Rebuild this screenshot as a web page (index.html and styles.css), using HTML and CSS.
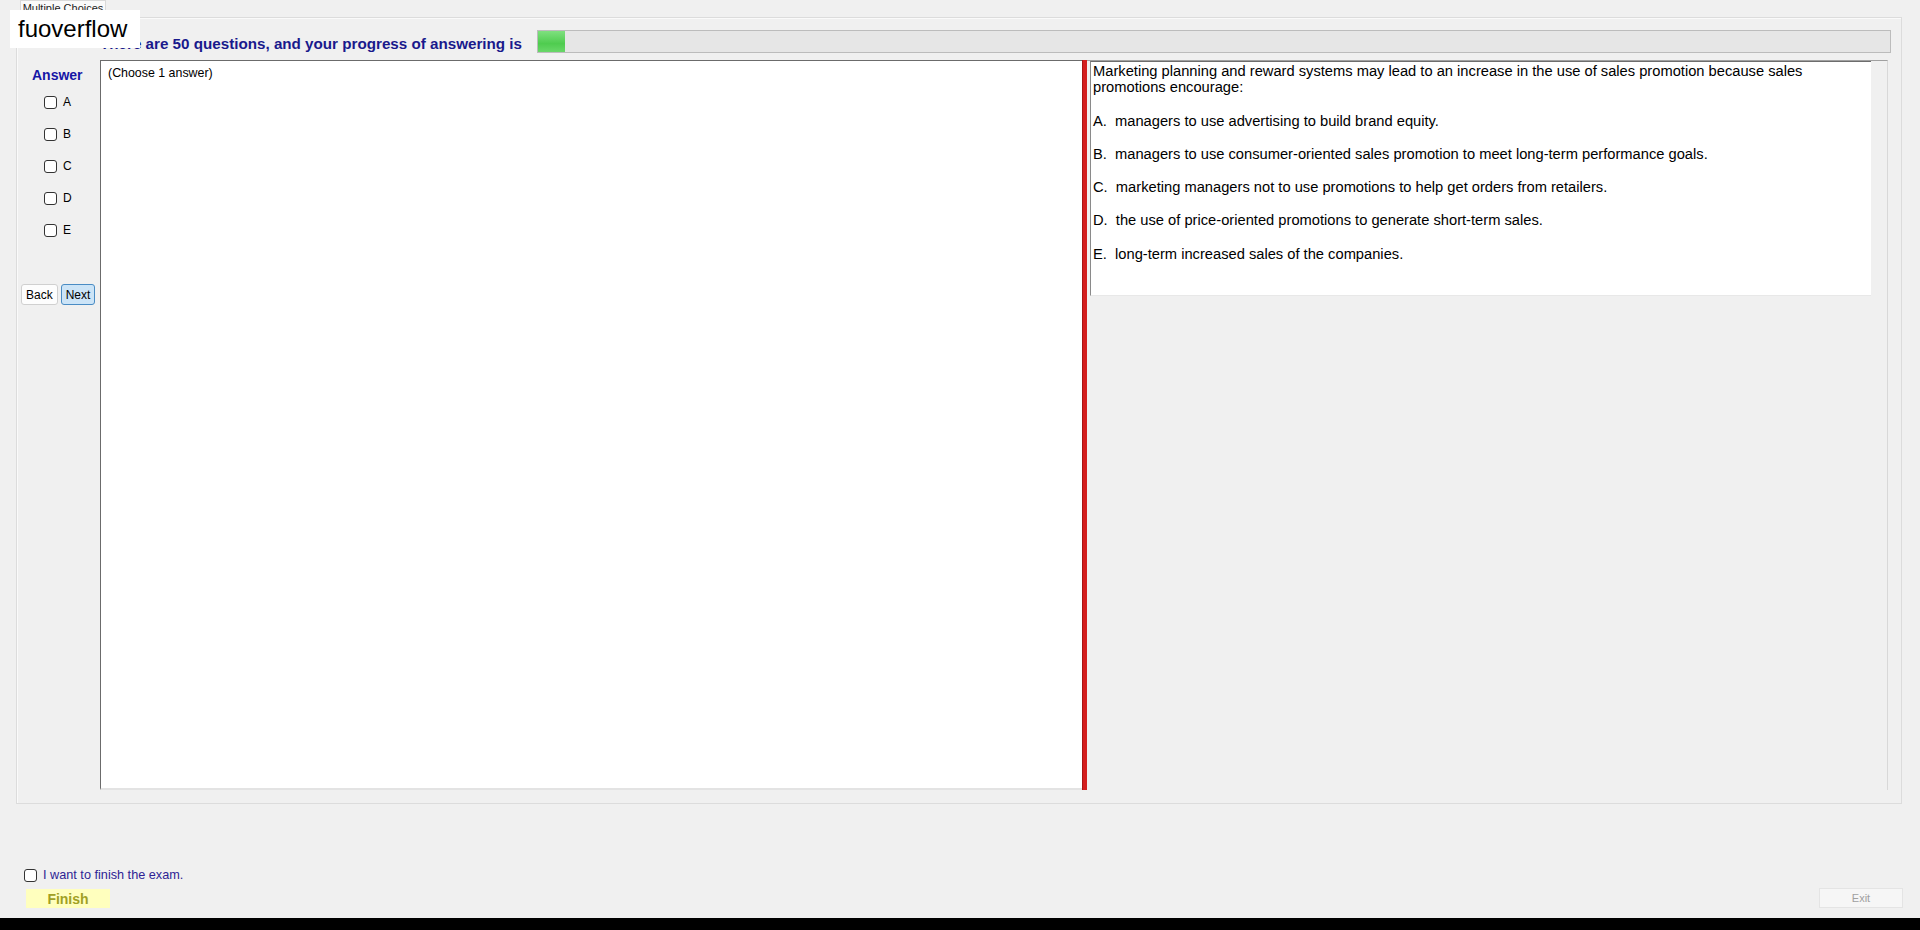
FILE: index.html
```html
<!DOCTYPE html>
<html lang="en">
<head>
    <meta charset="UTF-8">
    <meta name="viewport" content="width=device-width, initial-scale=1.0">
    <title>Multiple Choices</title>
    <link rel="stylesheet" href="styles.css">
</head>
<body>

<div class="window">
    <div class="tabs">
        <div class="tab">Multiple Choices</div>
    </div>

    <div class="tab-page">
        <div class="header">
            <span class="progress-text">There are 50 questions, and your progress of answering is</span>
            <div class="progress">
                <div class="progress-fill" style="width: 27px;"></div>
            </div>
        </div>

        <div class="body">
            <!-- answer column -->
            <div class="answer-col">
                <div class="answer-title">Answer</div>
                <label class="option"><input type="checkbox"> A</label>
                <label class="option"><input type="checkbox"> B</label>
                <label class="option"><input type="checkbox"> C</label>
                <label class="option"><input type="checkbox"> D</label>
                <label class="option"><input type="checkbox"> E</label>
                <div class="nav">
                    <button class="btn">Back</button>
                    <button class="btn btn-active">Next</button>
                </div>
            </div>

            <div class="split">
                <div class="pane-left">(Choose 1 answer)</div>
                <div class="splitter"></div>
                <div class="pane-right">
                    <div class="question">
                        <p>Marketing planning and reward systems may lead to an increase in the use of sales promotion because sales<br>promotions encourage:</p>
                        <p>A.&nbsp; managers to use advertising to build brand equity.</p>
                        <p>B.&nbsp; managers to use consumer-oriented sales promotion to meet long-term performance goals.</p>
                        <p>C.&nbsp; marketing managers not to use promotions to help get orders from retailers.</p>
                        <p>D.&nbsp; the use of price-oriented promotions to generate short-term sales.</p>
                        <p>E.&nbsp; long-term increased sales of the companies.</p>
                    </div>
                </div>
            </div>
        </div>
    </div>

    <div class="footer">
        <div class="finish-box">
            <label class="finish-check"><input type="checkbox"> I want to finish the exam.</label>
            <button class="finish-btn">Finish</button>
        </div>
        <button class="exit-btn">Exit</button>
    </div>

    <div class="taskbar"></div>
</div>

<div class="watermark">fuoverflow</div>

</body>
</html>
```
FILE: styles.css
```css
body {
    margin: 0;
    font-family: "Liberation Sans", Arial, sans-serif;
    background-color: #f0f0f0;
    color: #000;
    overflow: hidden;
}
.window {
    display: flex;
    flex-direction: column;
    height: 930px;
}
.tabs {
    height: 17px;
    padding-left: 20px;
    display: flex;
}
.tab {
    width: 86px;
    height: 17px;
    box-sizing: border-box;
    border: 1px solid #d9d9d9;
    border-bottom: none;
    background-color: #fafafa;
    font-size: 11px;
    line-height: 14px;
    color: #222;
    text-align: center;
}
.tab-page {
    margin-left: 16px;
    width: 1886px;
    height: 787px;
    box-sizing: border-box;
    border: 1px solid #dcdcdc;
    box-shadow: inset 1px 1px 0 #fafafa;
}
.header {
    height: 42px;
    display: flex;
    align-items: flex-start;
    padding-left: 83px;
}
.progress-text {
    margin-top: 17px;
    font-size: 15.2px;
    line-height: 17px;
    font-weight: bold;
    color: #19198c;
    white-space: nowrap;
}
.progress {
    flex: 1;
    margin: 12px 10px 0 15px;
    height: 23px;
    box-sizing: border-box;
    border: 1px solid #bcbcbc;
    background-color: #e6e6e6;
}
.progress-fill {
    height: 100%;
    background: linear-gradient(#7fe07f, #4fcc4f 60%, #69d769);
}
.body {
    display: flex;
    height: 730px;
}
.answer-col {
    width: 83px;
    padding-top: 7px;
    box-sizing: border-box;
}
.answer-title {
    padding-left: 15px;
    font-size: 14px;
    line-height: 16px;
    font-weight: bold;
    color: #1616a6;
    margin-bottom: 3px;
}
.option {
    display: flex;
    align-items: center;
    gap: 6px;
    height: 32px;
    padding-left: 27px;
    font-size: 12px;
}
input[type="checkbox"] {
    appearance: none;
    width: 13px;
    height: 13px;
    margin: 0;
    border: 1px solid #333;
    border-radius: 3px;
    background-color: #fff;
}
.nav {
    display: flex;
    gap: 3px;
    margin-top: 38px;
    padding-left: 4px;
}
.btn {
    height: 21px;
    padding: 0 4px;
    font-family: inherit;
    font-size: 12px;
    color: #000;
    background-color: #fdfdfd;
    border: 1px solid #d0d0d0;
    border-radius: 3px;
}
.btn-active {
    background-color: #cce4f7;
    border-color: #4a8cc4;
}
.split {
    flex: 1;
    display: flex;
    margin-right: 13px;
}
.pane-left {
    width: 982px;
    box-sizing: border-box;
    background-color: #fff;
    border-top: 1px solid #6b6b6b;
    border-left: 1px solid #6b6b6b;
    border-bottom: 2px solid #e3e3e3;
    padding: 5px 7px;
    font-size: 12.4px;
    line-height: 14px;
}
.splitter {
    width: 5px;
    background-color: #d41e1e;
    border-left: 1px solid #a81414;
    box-sizing: border-box;
}
.pane-right {
    flex: 1;
    border-top: 1px solid #a0a0a0;
    border-right: 1px solid #d8d8d8;
    padding-left: 3px;
    padding-right: 16px;
}
.question {
    height: 235px;
    box-sizing: border-box;
    background-color: #fff;
    border-top: 1px solid #6d6d6d;
    border-left: 1px solid #8a8a8a;
    border-bottom: 1px solid #e8e8e8;
    padding: 1px 2px;
    font-size: 14.7px;
    line-height: 16.3px;
}
.question p {
    margin: 17px 0 0;
}
.question p:first-child {
    margin-top: 0;
}
.footer {
    flex: 1;
    display: flex;
    justify-content: space-between;
    align-items: flex-end;
    padding: 0 17px 10px 24px;
}
.finish-box {
    display: flex;
    flex-direction: column;
    gap: 7px;
}
.finish-check {
    display: flex;
    align-items: center;
    gap: 6px;
    font-size: 12.7px;
    color: #2e1f94;
}
.finish-btn {
    width: 84px;
    height: 19px;
    margin-left: 2px;
    padding: 0;
    border: none;
    background-color: #ffffbe;
    font-family: inherit;
    font-size: 14px;
    font-weight: bold;
    color: #a0a024;
}
.exit-btn {
    width: 84px;
    height: 20px;
    padding: 0;
    border: 1px solid #e4e4e4;
    background-color: #f6f6f6;
    font-family: inherit;
    font-size: 11px;
    color: #a0a0a0;
}
.taskbar {
    height: 12px;
    background-color: #000;
}
.watermark {
    position: absolute;
    left: 10px;
    top: 10px;
    width: 130px;
    height: 38px;
    box-sizing: border-box;
    padding-left: 8px;
    background-color: #fff;
    font-size: 24px;
    line-height: 38px;
    color: #000;
}
```
